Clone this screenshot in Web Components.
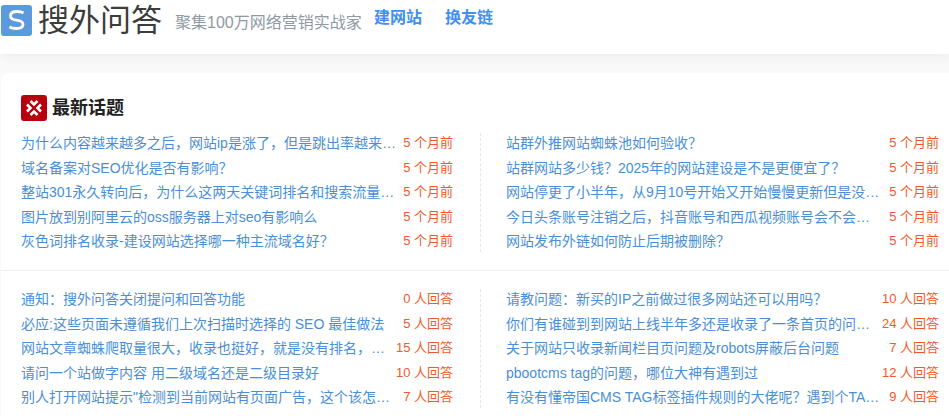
<!DOCTYPE html>
<html lang="zh-CN">
<head>
<meta charset="utf-8">
<title>搜外问答</title>
<style>
  html, body { margin:0; height:100%; overflow:hidden; background:#f9f9f9; }
  body { font-family:"Liberation Sans","Noto Sans CJK SC",sans-serif; }
</style>
</head>
<body>
<site-header></site-header>
<topic-card heading="最新话题">
  <topic-section>
    <topic-list slot="left">
      <topic-row meta="5 个月前">为什么内容越来越多之后，网站ip是涨了，但是跳出率越来…</topic-row>
      <topic-row meta="5 个月前">域名备案对SEO优化是否有影响？</topic-row>
      <topic-row meta="5 个月前">整站301永久转向后，为什么这两天关键词排名和搜索流量…</topic-row>
      <topic-row meta="5 个月前">图片放到别阿里云的oss服务器上对seo有影响么</topic-row>
      <topic-row meta="5 个月前">灰色词排名收录-建设网站选择哪一种主流域名好？</topic-row>
    </topic-list>
    <topic-list slot="right">
      <topic-row meta="5 个月前">站群外推网站蜘蛛池如何验收？</topic-row>
      <topic-row meta="5 个月前">站群网站多少钱？2025年的网站建设是不是更便宜了？</topic-row>
      <topic-row meta="5 个月前">网站停更了小半年，从9月10号开始又开始慢慢更新但是没…</topic-row>
      <topic-row meta="5 个月前">今日头条账号注销之后，抖音账号和西瓜视频账号会不会…</topic-row>
      <topic-row meta="5 个月前">网站发布外链如何防止后期被删除？</topic-row>
    </topic-list>
  </topic-section>
  <topic-section>
    <topic-list slot="left">
      <topic-row meta="0 人回答">通知：搜外问答关闭提问和回答功能</topic-row>
      <topic-row meta="5 人回答">必应:这些页面未遵循我们上次扫描时选择的 SEO 最佳做法</topic-row>
      <topic-row meta="15 人回答">网站文章蜘蛛爬取量很大，收录也挺好，就是没有排名，…</topic-row>
      <topic-row meta="10 人回答">请问一个站做字内容 用二级域名还是二级目录好</topic-row>
      <topic-row meta="7 人回答">别人打开网站提示"检测到当前网站有页面广告，这个该怎…</topic-row>
    </topic-list>
    <topic-list slot="right">
      <topic-row meta="10 人回答">请教问题：新买的IP之前做过很多网站还可以用吗？</topic-row>
      <topic-row meta="24 人回答">你们有谁碰到到网站上线半年多还是收录了一条首页的问…</topic-row>
      <topic-row meta="7 人回答">关于网站只收录新闻栏目页问题及robots屏蔽后台问题</topic-row>
      <topic-row meta="12 人回答">pbootcms tag的问题，哪位大神有遇到过</topic-row>
      <topic-row meta="9 人回答">有没有懂帝国CMS TAG标签插件规则的大佬呢？遇到个TA…</topic-row>
    </topic-list>
  </topic-section>
</topic-card>

<script>
/** Top bar with logo, slogan and two links. */
class SiteHeader extends HTMLElement {
  constructor() {
    super();
    this.attachShadow({ mode: "open" });
  }

  connectedCallback() {
    this.shadowRoot.innerHTML = `
      <style>
        :host { display:flex; align-items:center; box-sizing:border-box; height:54px; background:#fff; box-shadow:0 2px 10px rgba(0,0,0,0.06); padding:0 0 13px 1px; position:relative; }
        .logoMark { width:31px; height:31px; flex:none; }
        .siteName { font-size:31px; font-weight:400; color:#3c3c3c; margin-left:6px; width:137px; line-height:40px; white-space:nowrap; }
        .slogan { font-size:16px; color:#8f99a3; width:199px; white-space:nowrap; }
        .links { display:flex; gap:23px; margin-top:-9px; }
        a { font-size:16px; font-weight:700; color:#3f90f0; text-decoration:none; }
      </style>
      <svg class="logoMark" viewBox="0 0 31 31">
        <rect width="31" height="31" rx="3" fill="#5b9bdd"/>
        <path d="M22.500 8C21 7 19 6.500 16 6.500C11 6.500 9.500 8.500 9.500 11C9.500 14 12 14.700 15.500 15.200C19.500 15.800 22 16.500 22 19.300C22 22 20 23.500 15.500 23.500C12.500 23.500 10 23 8.500 22" fill="none" stroke="#fff" stroke-width="2.800"/>
      </svg>
      <span class="siteName">搜外问答</span>
      <span class="slogan">聚集100万网络营销实战家</span>
      <nav class="links"><a href="#">建网站</a><a href="#">换友链</a></nav>
    `;
  }
}

/** White card with an icon heading; sections go in the slot. */
class TopicCard extends HTMLElement {
  constructor() {
    super();
    this.attachShadow({ mode: "open" });
  }

  connectedCallback() {
    this.shadowRoot.innerHTML = `
      <style>
        :host { display:block; margin:19px 0 0 1px; padding-top:22px; background:#fff; border-radius:6px 0 0 0; }
        .cardHead { display:flex; align-items:center; gap:5px; height:26px; margin:0 0 10px 20px; }
        .cardIcon { width:26px; height:26px; flex:none; }
        h2 { margin:0; font-size:18px; font-weight:700; color:#222; line-height:26px; }
      </style>
      <div class="cardHead">
        <svg class="cardIcon" viewBox="0 0 26 26">
          <rect width="26" height="26" rx="3" fill="#b8000f"/>
          <g fill="none" stroke="#fff" stroke-width="2.600">
            <path d="M9.500 6 13 9.500 16.500 6"/>
            <path d="M9.500 20 13 16.500 16.500 20"/>
            <path d="M6 9.500 9.500 13 6 16.500"/>
            <path d="M20 9.500 16.500 13 20 16.500"/>
          </g>
        </svg>
        <h2>${this.getAttribute("heading")}</h2>
      </div>
      <slot></slot>
    `;
  }
}

/** Two list columns with a dashed rule between them. */
class TopicSection extends HTMLElement {
  constructor() {
    super();
    this.attachShadow({ mode: "open" });
  }

  connectedCallback() {
    this.shadowRoot.innerHTML = `
      <style>
        :host { display:grid; grid-template-columns:432px auto 1fr; padding:0 10px 16.5px 20px; }
        :host(:not(:first-child)) { border-top:1px solid #edf0f5; padding-top:16px; }
        .columnRule { border-left:1px dashed #e6e6e6; margin:2px 25px 2px 27px; }
      </style>
      <div><slot name="left"></slot></div>
      <div class="columnRule"></div>
      <div><slot name="right"></slot></div>
    `;
  }
}

class TopicList extends HTMLElement {
  constructor() {
    super();
    this.attachShadow({ mode: "open" });
  }

  connectedCallback() {
    this.shadowRoot.innerHTML = `
      <style>:host { display:block; }</style>
      <slot></slot>
    `;
  }
}

/** One line: clipped title on the left, meta text on the right. */
class TopicRow extends HTMLElement {
  constructor() {
    super();
    this.attachShadow({ mode: "open" });
  }

  connectedCallback() {
    this.shadowRoot.innerHTML = `
      <style>
        :host { display:flex; justify-content:space-between; height:24.5px; line-height:24.5px; font-size:14px; }
        .topicTitle { width:375px; overflow:hidden; white-space:nowrap; text-overflow:ellipsis; color:#4a8fd6; }
        .topicMeta { font-size:13px; white-space:nowrap; color:#f4582a; }
      </style>
      <span class="topicTitle"><slot></slot></span>
      <span class="topicMeta">${this.getAttribute("meta")}</span>
    `;
  }
}

customElements.define("site-header", SiteHeader);
customElements.define("topic-card", TopicCard);
customElements.define("topic-section", TopicSection);
customElements.define("topic-list", TopicList);
customElements.define("topic-row", TopicRow);
</script>
</body>
</html>
